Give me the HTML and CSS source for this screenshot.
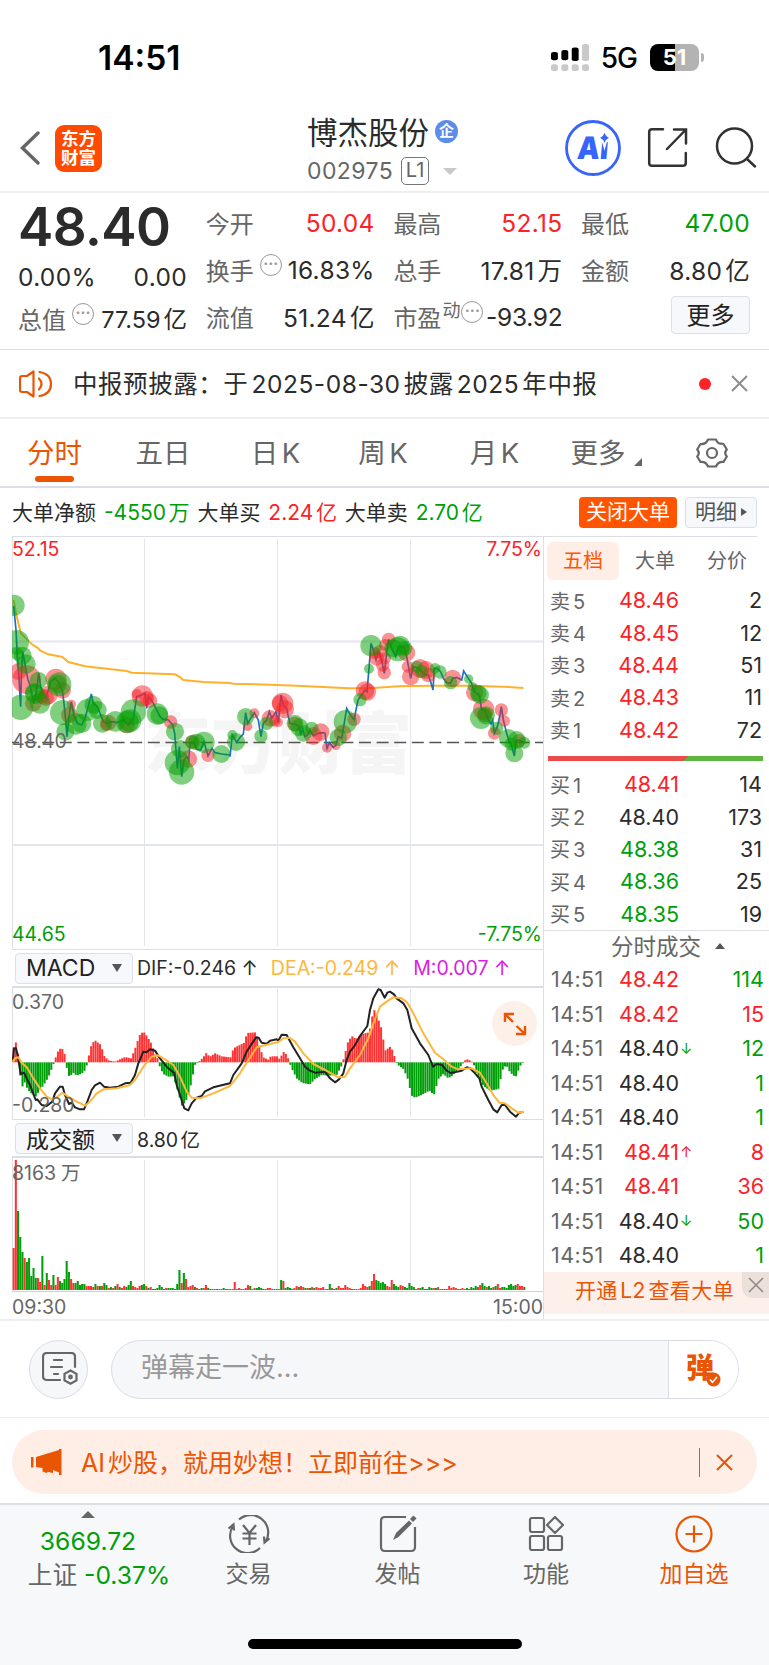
FILE: index.html
```html
<!DOCTYPE html>
<html lang="zh-CN">
<head>
    <meta charset="UTF-8">
    <meta name="viewport" content="width=device-width, initial-scale=1.0">
    <title>博杰股份 002975</title>
    <link rel="stylesheet" href="styles.css">
</head>
<body>
    <div class="status-bar">
        <span class="clock">14:51</span>
        <div class="status-right">
            <svg width="38" height="27" viewBox="0 0 38.500 40" preserveAspectRatio="none">
                <g fill="#000"><rect x="0" y="12" width="7" height="12" rx="2.5"/><rect x="10.5" y="9" width="7" height="15" rx="2.5"/><rect x="21" y="5" width="7" height="20" rx="2.5"/></g>
                <g fill="#c9c9c9"><rect x="31.500" y="0" width="7" height="25" rx="2.5"/><rect x="0" y="30" width="7" height="10" rx="2.5"/><rect x="10.500" y="30" width="7" height="10" rx="2.5"/><rect x="21" y="30" width="7" height="10" rx="2.5"/><rect x="31.500" y="30" width="7" height="10" rx="2.5"/></g>
            </svg>
            <span class="net">5G</span>
            <span class="battery">51</span>
        </div>
    </div>

    <header class="header">
        <div class="header-left">
            <svg class="back" width="20" height="34" viewBox="0 0 20 34" fill="none" stroke="#666" stroke-width="3.400" stroke-linecap="round"><path d="M18 2 2.500 17 18 32"/></svg>
            <div class="logo">东方<br>财富</div>
        </div>
        <div class="stock">
            <div class="stock-name">博杰股份<span class="ent">企</span></div>
            <div class="stock-code">002975<span class="level">L1</span><i class="caret"></i></div>
        </div>
        <div class="header-right">
            <svg width="56" height="56" viewBox="0 0 56 56">
                <circle cx="28" cy="28" r="26.500" fill="none" stroke="#3764fb" stroke-width="2.800"/>
                <text class="ai" x="15" y="39" textLength="31" lengthAdjust="spacingAndGlyphs" transform="skewX(-5)">Ai</text>
                <path d="M39.500 12.500q1 4 4.500 5.300-3.500 1.400-4.500 5.200-1-3.800-4.500-5.200 3.500-1.300 4.500-5.300z" fill="#3764fb" stroke="#fff" stroke-width="4" paint-order="stroke"/>
            </svg>
            <svg width="42" height="42" viewBox="0 0 42 42" fill="none" stroke="#323232" stroke-width="2.500" stroke-linecap="round"><path d="M16 2.200H5Q2.200 2.200 2.200 5v31q0 2.800 2.800 2.800h31q2.800 0 2.800-2.800V26"/><path d="M27 2.500h12v14M38.500 3 20 22"/></svg>
            <svg width="42" height="42" viewBox="0 0 42 42" fill="none" stroke="#323232" stroke-width="2.500" stroke-linecap="round"><circle cx="19.500" cy="19" r="17.500"/><path d="M32 32l8 7.500"/></svg>
        </div>
    </header>

    <section class="quote">
        <div class="col first">
            <div class="price">48.40</div>
            <div class="row pct"><span>0.00%</span><span>0.00</span></div>
            <div class="row"><label>总值</label><i class="tip">···</i><span>77.59亿</span></div>
        </div>
        <div class="col">
            <div class="row"><label>今开</label><span class="red">50.04</span></div>
            <div class="row"><label>换手</label><i class="tip">···</i><span>16.83%</span></div>
            <div class="row"><label>流值</label><span>51.24亿</span></div>
        </div>
        <div class="col">
            <div class="row"><label>最高</label><span class="red">52.15</span></div>
            <div class="row"><label>总手</label><span>17.81万</span></div>
            <div class="row"><label>市盈<sup>动</sup></label><i class="tip tight">···</i><span>-93.92</span></div>
        </div>
        <div class="col">
            <div class="row"><label>最低</label><span class="green">47.00</span></div>
            <div class="row"><label>金额</label><span>8.80亿</span></div>
            <div class="row end"><button class="more-btn">更多</button></div>
        </div>
    </section>

    <div class="notice">
        <svg width="34" height="28" viewBox="0 0 34 28" fill="none" stroke="#ea5504" stroke-width="2.200" stroke-linejoin="round" stroke-linecap="round"><path d="M14.500 1.500v25L8 22H3q-2 0-2-2V8q0-2 2-2h5z"/><path d="M20 8.500q5 5.500 0 11M20.500 2Q32 4 32 14T20.500 26"/></svg>
        <p>中报预披露：于2025-08-30披露2025年中报</p>
        <i class="dot"></i>
        <svg class="x" width="17" height="17" viewBox="0 0 17 17" stroke="#8c8c8c" stroke-width="2"><path d="M1 1 16 16M16 1 1 16"/></svg>
    </div>

    <nav class="tabs">
        <a class="active">分时</a>
        <a>五日</a>
        <a>日K</a>
        <a>周K</a>
        <a>月K</a>
        <a class="more">更多</a>
        <svg width="32" height="32" viewBox="0 0 32 32" fill="none" stroke="#666" stroke-width="2.200" stroke-linejoin="round"><path d="M12 2.500h8q1.500 4.500 5.500 4.200l2 .3 3.300 5.500q-3.200 3.500 0 7L27.500 25q-5.500-.5-7.500 4.500h-8Q10 24.500 4.500 25L1.200 19.500q3.200-3.500 0-7L4.500 7Q10 7.500 12 2.500z"/><circle cx="16" cy="16" r="5"/></svg>
    </nav>

    <div class="big-order">
        <p>大单净额 <b class="green">-4550万</b> 大单买 <b class="red">2.24亿</b> 大单卖 <b class="green">2.70亿</b></p>
        <button class="close-big">关闭大单</button>
        <button class="detail">明细<i></i></button>
    </div>

    <main class="market">
        <div class="charts">
            <svg class="main-chart" width="531" height="412" viewBox="0 0 531 412">
                <g class="grid-line"><path d="M132.500 2V409M265.500 2V409M398.500 2V409"/><path d="M0 104.500H532M0 308H532" stroke-width="2"/></g>
                <text class="watermark" x="132" y="231">东方财富</text>
                <path d="M0 205.500H532" stroke="#555" stroke-width="1.300" stroke-dasharray="12 5.600" stroke-dashoffset="5"/>
                <g transform="translate(-12 -7) scale(.33333)">
                    <polyline id="avgLine" fill="none" stroke="#ffb02e" stroke-width="6"/>
                    <polyline id="priceLine" fill="none" stroke="#1f6fc9" stroke-width="5"/>
                    <g id="bubbles"></g>
                </g>
                <g class="axis">
                    <text x="0" y="19" class="f-red">52.15</text><text x="530" y="19" text-anchor="end" class="f-red">7.75%</text>
                    <text x="0" y="211">48.40</text>
                    <text x="0" y="404" class="f-green">44.65</text><text x="530" y="404" text-anchor="end" class="f-green">-7.75%</text>
                </g>
            </svg>
            <div class="indicator">
                <span class="select wide">MACD</span>
                <span class="val">DIF:-0.246 ↑</span><span class="val dea">DEA:-0.249 ↑</span><span class="val m">M:0.007 ↑</span>
            </div>
            <div class="macd-wrap">
                <svg width="531" height="131" viewBox="0 0 531 131">
                    <path class="grid-line" d="M132.500 1V129M265.500 1V129M398.500 1V129"/>
                    <g transform="translate(-12 -58) scale(.33333)">
                        <g id="macdBars"></g>
                        <polyline id="difLine" fill="none" stroke="#222" stroke-width="6" stroke-linejoin="round"/>
                        <polyline id="deaLine" fill="none" stroke="#fdb73a" stroke-width="6" stroke-linejoin="round"/>
                    </g>
                    <g class="axis"><text x="0" y="21">0.370</text><text x="0" y="124">-0.280</text></g>
                </svg>
                <div class="expand"><svg width="24" height="24" viewBox="0 0 24 24" fill="none" stroke="#ea5504" stroke-width="2.400"><path d="M2 10V2h9M2 2l8 8M22 14v8h-9M22 22l-8.500-8"/></svg></div>
            </div>
            <div class="indicator vol">
                <span class="select">成交额</span>
                <span class="val">8.80亿</span>
            </div>
            <svg class="vol-chart" width="531" height="133" viewBox="0 0 531 133">
                <path class="grid-line" d="M132.500 2V132M265.500 2V132M398.500 2V132"/>
                <g id="volBars"></g>
                <g class="axis"><text x="0" y="22">8163</text><text x="49" y="22">万</text></g>
            </svg>
            <div class="time-axis"><span>09:30</span><span>15:00</span></div>
        </div>

        <aside class="side">
            <div class="side-tabs"><span class="on">五档</span><span>大单</span><span>分价</span></div>
            <div class="book">
                <div><label>卖5</label><span class="red">48.46</span><em>2</em></div>
                <div><label>卖4</label><span class="red">48.45</span><em>12</em></div>
                <div><label>卖3</label><span class="red">48.44</span><em>51</em></div>
                <div><label>卖2</label><span class="red">48.43</span><em>11</em></div>
                <div><label>卖1</label><span class="red">48.42</span><em>72</em></div>
            </div>
            <div class="ratio"></div>
            <div class="book">
                <div><label>买1</label><span class="red">48.41</span><em>14</em></div>
                <div><label>买2</label><span>48.40</span><em>173</em></div>
                <div><label>买3</label><span class="green">48.38</span><em>31</em></div>
                <div><label>买4</label><span class="green">48.36</span><em>25</em></div>
                <div><label>买5</label><span class="green">48.35</span><em>19</em></div>
            </div>
            <div class="deal-title">分时成交<i></i></div>
            <div class="deals">
                <div><label>14:51</label><span class="red">48.42</span><i></i><em class="green">114</em></div>
                <div><label>14:51</label><span class="red">48.42</span><i></i><em class="red">15</em></div>
                <div><label>14:51</label><span>48.40</span><i class="green">↓</i><em class="green">12</em></div>
                <div><label>14:51</label><span>48.40</span><i></i><em class="green">1</em></div>
                <div><label>14:51</label><span>48.40</span><i></i><em class="green">1</em></div>
                <div><label>14:51</label><span class="red">48.41</span><i class="red">↑</i><em class="red">8</em></div>
                <div><label>14:51</label><span class="red">48.41</span><i></i><em class="red">36</em></div>
                <div><label>14:51</label><span>48.40</span><i class="green">↓</i><em class="green">50</em></div>
                <div><label>14:51</label><span>48.40</span><i></i><em class="green">1</em></div>
            </div>
            <div class="promo">开通L2查看大单<span class="promo-x"><svg width="16" height="16" viewBox="0 0 16 16" stroke="#8f8782" stroke-width="1.500"><path d="M1 1 15 15M15 1 1 15"/></svg></span></div>
        </aside>
    </main>

    <div class="danmu">
        <div class="danmu-set">
            <svg width="36" height="34" viewBox="0 0 36 34" fill="none" stroke="#666" stroke-width="2.200" stroke-linecap="round"><path d="M18 28H5q-4 0-4-4V5q0-4 4-4h24q4 0 4 4v10M12 8h8M9 15h11M12 22h4"/><path d="M28.500 18.500l6 3.300v6.600l-6 3.400-6-3.400v-6.600z"/><circle cx="28.500" cy="25" r="1.300"/></svg>
        </div>
        <div class="danmu-input">
            <span>弹幕走一波...</span>
            <div class="danmu-switch">弹<svg width="15" height="15" viewBox="0 0 15 15"><circle cx="7.500" cy="7.500" r="7" fill="#ea5504"/><path d="M4 7.500l2.500 2.700L11 5" fill="none" stroke="#fff" stroke-width="1.600"/></svg></div>
        </div>
    </div>

    <div class="banner-wrap">
        <div class="banner">
            <svg width="31" height="26" viewBox="0 0 31 26" fill="#ea5504"><path d="M0 8h2.500v10.500H0zM5 8 28 1V0h2.500v26H28v-2.500L22 21v3l-5-1-1.500 1-4-1.500V19L5 18z"/></svg>
            <p>AI炒股，就用妙想！立即前往&gt;&gt;&gt;</p>
            <svg class="banner-x" width="17" height="17" viewBox="0 0 17 17" stroke="#ea5504" stroke-width="2"><path d="M1 1 16 16M16 1 1 16"/></svg>
        </div>
    </div>

    <footer class="footer">
        <div class="index-box">
            <i></i>
            <div class="green">3669.72</div>
            <div>上证 <span class="green">-0.37%</span></div>
        </div>
        <div class="item">
            <svg width="44" height="38" viewBox="0 0 44 38" fill="none" stroke="#666" stroke-width="2.200"><path d="M12 4.500A17.500 17.500 0 0 1 39 26M42.500 23.500l-5 4-.5-6M33 33A17.500 17.500 0 0 1 6 11M1.500 13.500l5-4 .5 6"/><path d="M16 10l6.500 8L29 10M15.500 18.500h14M15.500 23.500h14M22.500 18v12"/></svg>
            <span>交易</span>
        </div>
        <div class="item">
            <svg width="38" height="38" viewBox="0 0 38 38" fill="none" stroke="#666" stroke-width="2.200"><path d="M27 2H6Q2 2 2 6v26q0 4 4 4h26q4 0 4-4V12"/><path d="M14 25l3-7L30 5.500l3 3L19.500 22z" fill="#666" stroke="none"/><path d="M32.500 4l2-2 1.500 1.500-2 2z" fill="#666"/></svg>
            <span>发帖</span>
        </div>
        <div class="item">
            <svg width="36" height="36" viewBox="0 0 36 36" fill="none" stroke="#666" stroke-width="2.200" stroke-linejoin="round"><rect x="2" y="2" width="14" height="14" rx="2"/><rect x="2" y="20" width="14" height="14" rx="2"/><rect x="20" y="20" width="14" height="14" rx="2"/><path d="M27 1l8 8-8 8-8-8z"/></svg>
            <span>功能</span>
        </div>
        <div class="item add">
            <svg width="38" height="38" viewBox="0 0 38 38" fill="none" stroke="#ea5504" stroke-width="2.200"><circle cx="19" cy="19" r="17.500"/><path d="M10.500 19h17M19 10.500v17"/></svg>
            <span>加自选</span>
        </div>
        <div class="home-bar"></div>
    </footer>

    <script>
        const RED = '#f33', GREEN = '#009f0a';

        // 价格线，左半段和右半段分开记录
        const priceL = [41,228,48,300,52,380,56,430,62,530,64,440,68,365,72,385,78,420,84,450,90,465,97,500,101,520,110,480,116,430,122,470,130,490,137,505,145,480,152,455,165,445,175,455,187,480,192,520,196,560,201,620,207,560,214,515,222,555,232,580,245,585,255,565,262,540,274,492,280,520,292,530,300,550,310,575,320,580,335,575,350,578,370,570,385,585,400,565,410,500,425,495,435,490,440,535,445,500,455,510,465,530,480,560,490,568,505,570,518,585,524,610,528,660,532,715,538,650,545,740,552,690,560,680,566,690,570,640,582,640,590,658,602,660,612,635,624,678,636,655,645,668,665,672,690,675,690,680,697,615,710,637,720,622,730,612,737,548,743,580,752,565,763,548,775,570,783,620,790,580,800,570,808,545];
        const priceR = [5,355,18,335,25,368,33,285,40,315,50,325,55,350,60,370,75,372,88,380,92,405,98,385,104,410,112,405,120,390,130,408,145,400,160,398,165,400,171,445,178,428,190,442,198,435,205,410,215,415,222,375,230,325,238,340,252,360,264,300,275,285,285,270,291,275,297,205,303,130,310,150,318,180,325,155,335,180,343,220,350,160,356,118,365,145,377,170,385,140,400,140,410,170,422,235,430,200,445,205,455,215,468,225,475,225,482,245,489,270,493,205,500,205,512,215,520,235,530,248,542,250,548,235,560,232,575,240,581,213,595,235,605,250,612,275,628,285,635,330,645,330,655,360,663,372,668,360,673,400,682,380,690,345,694,320,700,360,710,400,716,420,724,435,733,468,738,425,746,420,755,425,765,428];
        const avgL = [41,210,48,250,55,280,63,310,75,322,95,342,115,355,120,361,145,373,187,381,205,396,255,409,380,423,395,428,525,433,540,441,550,450,610,456,690,459,700,461];
        const avgR = [0,254,80,257,160,261,235,265,300,265,385,259,480,257,600,257,700,260,760,264];

        // 大单气泡：x, y, 半径
        const redL = [55,425,25,80,449,43,100,520,25,137,503,25,145,495,28,125,500,22,168,448,32,188,481,25,214,523,14,208,555,25,325,578,24,318,585,18,380,585,25,427,498,32,410,492,15,440,505,22,450,512,22,512,576,20,565,687,26,578,636,22,624,676,20,763,550,15,743,589,14,810,565,25,840,520,25,824,572,18];
        const greenL = [42,226,32,50,337,37,50,370,20,68,377,27,78,402,29,62,532,38,115,451,26,102,487,27,120,520,31,105,492,30,178,463,36,172,462,28,188,548,38,196,605,27,228,582,32,245,580,29,262,540,33,280,524,27,293,540,27,307,580,28,346,574,31,382,576,34,390,572,34,400,546,38,472,552,32,478,556,27,525,605,27,540,657,27,532,698,38,545,726,38,575,636,20,612,637,32,664,672,27,590,636,25,697,615,15,708,636,27,737,560,26,783,618,20,800,580,20];
        const redR = [38,310,32,45,328,27,25,367,14,75,372,22,130,408,27,152,396,26,171,443,15,198,436,14,218,400,26,252,358,20,285,272,28,292,276,26,315,160,18,320,175,22,330,155,20,338,195,20,343,218,20,356,118,20,345,175,18,345,135,18,410,158,26,413,200,18,422,230,26,450,205,28,467,210,27,475,225,22,548,235,26,614,278,26,641,328,32,645,345,22,673,400,19,694,330,20,703,363,17,747,422,20];
        const greenR = [75,370,25,88,382,27,100,400,25,125,385,20,226,365,35,205,412,26,270,299,20,297,206,15,303,137,32,370,145,27,383,148,36,390,137,30,405,145,22,440,200,18,455,215,20,495,205,16,510,216,20,542,248,20,596,237,14,625,280,25,630,285,27,607,260,14,633,354,33,648,346,27,680,385,20,715,415,28,724,432,20,733,460,27,763,428,18,740,420,27];

        const difL = [38,395,42,355,48,355,53,375,62,432,72,428,80,445,90,465,107,510,112,508,125,525,140,528,157,515,165,490,180,470,188,470,195,495,207,522,215,518,225,532,240,538,252,538,262,515,275,480,285,466,300,458,312,470,330,473,355,470,375,460,392,458,405,435,415,400,430,365,440,367,450,358,465,362,480,385,500,410,523,430,530,465,545,510,553,535,565,541,575,520,590,503,605,498,615,484,640,472,690,460,700,435,725,400,740,365,768,322,776,323,785,338,800,341];
        const difR = [0,332,20,328,25,332,35,314,50,315,58,330,70,352,90,385,105,410,120,422,135,428,165,425,180,445,195,457,207,448,220,430,230,390,240,365,252,350,270,318,292,288,300,240,310,205,325,178,332,180,344,203,352,188,360,185,372,193,380,205,400,220,412,240,425,295,450,340,475,375,489,410,500,402,515,404,530,422,542,429,575,422,590,412,600,415,615,430,628,445,635,470,655,510,670,538,682,547,695,525,705,525,720,545,738,560,748,548,760,545];
        const deaL = [38,395,45,385,55,382,65,398,80,412,100,445,120,475,140,500,157,508,170,502,187,488,205,500,230,515,255,527,270,515,290,490,310,478,350,475,390,465,405,450,430,410,455,380,475,376,495,388,520,405,540,440,560,485,575,503,600,505,640,490,690,468,720,430,745,390,770,352,785,348];
        const deaR = [0,342,25,336,40,325,58,323,75,335,100,370,130,402,165,420,205,442,225,440,240,415,270,375,295,325,310,280,330,230,350,215,370,202,395,205,412,218,430,250,460,310,495,368,520,388,545,410,565,418,605,415,630,428,650,460,670,495,688,518,705,520,725,535,745,548,760,545];

        // MACD 柱的拐点：x, 高度（正红负绿）
        const histL = [38,20,44,68,51,52,57,5,60,-30,65,-82,72,-55,80,-75,90,-90,107,-103,118,-85,130,-70,145,-45,158,-12,164,5,172,30,183,44,192,35,198,0,203,-35,210,-45,218,-30,230,-40,248,-32,258,-20,263,5,275,55,285,66,303,52,312,20,325,6,345,2,375,16,393,12,405,40,418,80,430,93,440,80,455,55,465,25,474,10,480,-15,490,-35,505,-43,520,-42,535,-90,545,-130,556,-120,568,-90,578,-40,586,-5,598,3,610,15,618,28,630,17,645,27,665,18,693,15,700,42,735,60,740,88,768,90,778,50,790,15,805,8];
        const histR = [2,18,25,18,30,5,35,22,42,32,52,20,58,0,66,-20,80,-48,97,-62,120,-66,135,-50,155,-38,175,-40,200,-38,215,-10,222,15,235,65,247,78,258,70,275,85,298,90,308,145,314,158,325,130,335,100,345,35,362,48,370,30,377,5,384,-8,400,-20,412,-45,425,-100,435,-106,455,-98,478,-85,492,-98,505,-50,520,-35,535,-48,550,-38,565,-20,578,-5,583,5,592,9,602,5,610,-2,620,-35,640,-70,660,-85,685,-80,700,-15,710,-10,720,-30,737,-45,750,-12,757,-2,763,4];

        // 每分钟成交额（正红负绿）
        const vol = [42,130,-79,-53,-38,32,-28,-32,-14,-22,-12,12,8,-34,5,-17,10,5,-15,5,13,-9,-7,-11,-29,-18,11,7,-7,-9,-5,-6,-6,4,4,4,3,-6,4,-4,4,-7,-5,2,-3,2,-4,6,-3,2,4,-3,-5,-9,4,3,2,4,-5,-6,4,-2,3,-1,-1,-2,-5,-3,-1,2,-2,-2,-2,-1,-6,-20,7,-17,11,3,4,5,-3,2,-1,-2,2,5,-2,-1,-1,1,-1,1,1,-2,-1,1,1,1,8,1,2,-1,1,2,5,-4,1,2,-2,-3,-2,-1,1,2,2,1,1,1,1,-10,9,-2,-3,-2,-1,2,4,-3,4,3,-2,2,-2,3,-2,3,2,2,3,1,-1,-6,2,-1,-2,4,2,2,5,3,2,-1,1,1,1,2,6,4,3,-4,9,16,-10,-9,-7,-8,-6,4,3,10,-6,-4,-3,5,4,-3,-2,-7,-4,-3,1,2,-2,-3,-1,-1,-3,-2,2,-2,3,1,-1,-1,1,4,2,3,2,1,-1,2,1,-2,-1,-3,-2,-4,3,5,-7,-4,3,-4,-2,3,-4,6,2,-3,-3,-2,-5,-6,-4,-5,6,4,4,-3];

        function shift(arr, dx, dy) {
            return arr.map((v, i) => v + (i % 2 ? dy : dx));
        }

        function line(id, left, right, dy) {
            const el = document.getElementById(id);
            el.setAttribute('points', left.concat(shift(right, 810, dy)).join(' '));
        }

        function bubbles(arr, color, dx, dy) {
            let html = '';
            for (let i = 0; i < arr.length; i += 3) {
                html += `<circle cx="${arr[i] + dx}" cy="${arr[i + 1] + dy}" r="${arr[i + 2]}" fill="${color}"/>`;
            }
            return html;
        }

        line('priceLine', priceL, priceR, 210);
        line('avgLine', avgL, avgR, 210);
        line('difLine', difL, difR, 0);
        line('deaLine', deaL, deaR, 0);

        document.getElementById('bubbles').innerHTML =
            bubbles(redL, 'rgba(245,35,40,.5)', 0, 0) + bubbles(greenL, 'rgba(0,160,0,.5)', 0, 0) +
            bubbles(redR, 'rgba(245,35,40,.5)', 810, 210) + bubbles(greenR, 'rgba(0,160,0,.5)', 810, 210);

        const hist = histL.concat(shift(histR, 810, 0));
        let bars = '';
        let k = 0;
        for (let x = 41; x <= 1573; x += 6.64) {
            while (k < hist.length - 4 && hist[k + 2] < x) k += 2;
            const t = (x - hist[k]) / (hist[k + 2] - hist[k]);
            const h = hist[k + 1] + (hist[k + 3] - hist[k + 1]) * t;
            bars += `<rect x="${x - 3}" y="${h > 0 ? 397 - h : 397}" width="6" height="${Math.max(2, Math.abs(h))}" fill="${h > 0 ? RED : GREEN}"/>`;
        }
        document.getElementById('macdBars').innerHTML = bars;

        document.getElementById('volBars').innerHTML = vol.map((v, i) =>
            `<rect x="${(0.6 + i * 2.211).toFixed(2)}" y="${132 - Math.abs(v)}" width="2.050" height="${Math.abs(v)}" fill="${v > 0 ? RED : GREEN}"/>`
        ).join('');
    </script>
</body>
</html>
```

FILE: styles.css
```css
* {
    box-sizing: border-box;
}

body {
    margin: 0;
    width: 769px;
    height: 1665px;
    overflow: hidden;
    display: flex;
    flex-direction: column;
    background: #fff;
    color: #2b2b2b;
    font-family: Inter, "Noto Sans CJK SC", sans-serif;
    text-autospace: normal;
}

p {
    margin: 0;
}

i, em {
    font-style: normal;
}

svg {
    display: block;
    flex: none;
}

button {
    font-family: inherit;
    padding: 0;
}

.red {
    color: #fb2228;
}

.green {
    color: #009f0a;
}

/* 状态栏 */
.status-bar {
    height: 107px;
    padding: 8px 65px 0 98px;
    display: flex;
    justify-content: space-between;
    align-items: center;
    color: #000;
}

.clock {
    font-size: 33.500px;
    font-weight: 600;
}

.status-right {
    display: flex;
    align-items: center;
}

.net {
    font-size: 28px;
    font-weight: 500;
    margin: 1px 13px 0 12px;
    letter-spacing: -1px;
}

.battery {
    position: relative;
    width: 49px;
    height: 27px;
    border-radius: 8px;
    background: linear-gradient(90deg, #000 51%, #b3b3b3 51%);
    color: #fff;
    font-size: 22px;
    font-weight: 700;
    line-height: 27px;
    text-align: center;
    margin-right: 5px;
}

.battery::after {
    content: "";
    position: absolute;
    right: -5px;
    top: 9px;
    width: 3px;
    height: 9px;
    border-radius: 0 3px 3px 0;
    background: #b3b3b3;
}

/* 头部 */
.header {
    height: 86px;
    display: grid;
    grid-template-columns: 250px 1fr 250px;
    align-items: center;
    border-bottom: 2px solid #eee;
}

.header-left, .header-right {
    display: flex;
    align-items: center;
    padding-bottom: 3px;
}

.header-left {
    padding-left: 20px;
    gap: 15px;
}

.header-right {
    justify-content: flex-end;
    gap: 26px;
    padding-right: 12px;
}

.ai {
    font-size: 31px;
    font-weight: 900;
    fill: #3764fb;
}

.logo {
    width: 47px;
    height: 47px;
    border-radius: 9px;
    background: #ff4a00;
    color: #fff;
    font-size: 17.500px;
    font-weight: 700;
    line-height: 19px;
    padding-top: 4px;
    text-align: center;
}

.stock {
    padding: 5px 0 0 57px;
}

.stock-name {
    display: flex;
    align-items: center;
    height: 38px;
    font-size: 30.500px;
}

.ent {
    width: 23px;
    height: 23px;
    margin-left: 6px;
    border-radius: 50%;
    background: #5b8ceb;
    color: #fff;
    font-size: 15px;
    font-weight: 700;
    line-height: 22px;
    text-align: center;
}

.stock-code {
    display: flex;
    align-items: center;
    height: 42px;
    color: #666;
    font-size: 23px;
    letter-spacing: .4px;
}

.level {
    height: 28px;
    width: 28px;
    margin: 0 14px 0 8px;
    border: 1.500px solid #777;
    border-radius: 5px;
    font-size: 20px;
    line-height: 25px;
    text-align: center;
    letter-spacing: 0;
}

.caret {
    border: 7px solid transparent;
    border-top-color: #c8c8c8;
    border-bottom: 0;
}

/* 行情 */
.quote {
    height: 157px;
    padding: 6px 18px 0;
    display: grid;
    grid-template-columns: repeat(4, 169px);
    column-gap: 18.700px;
    border-bottom: 1px solid #ddd;
    font-size: 24.500px;
    letter-spacing: .3px;
}

.row {
    display: flex;
    align-items: center;
    justify-content: space-between;
    height: 47px;
    white-space: nowrap;
}

.row label {
    color: #666;
    font-size: 24px;
    letter-spacing: 0;
}

.price {
    height: 55px;
    font-size: 53px;
    font-weight: 600;
    line-height: 56px;
    letter-spacing: -.6px;
}

.row.pct {
    height: 46px;
}

.first .row:last-child {
    height: 36px;
}

.first .row:last-child span {
    font-size: 23.500px;
    letter-spacing: 0;
}

.tip {
    width: 22px;
    height: 22px;
    margin: -9px auto 0 6px;
    border: 1.500px solid #999;
    border-radius: 50%;
    color: #999;
    font-size: 15px;
    font-weight: 700;
    line-height: 18px;
    text-align: center;
    letter-spacing: 0;
}

.tip.tight {
    margin-left: 1px;
}

.tight + span {
    letter-spacing: -.3px;
}

.row sup {
    font-size: 18px;
    line-height: 0;
    vertical-align: 10px;
    margin-left: 1px;
}

.row.end {
    justify-content: flex-end;
}

.more-btn {
    width: 79px;
    height: 38px;
    border: 1.500px solid #dcdfe8;
    border-radius: 4px;
    background: #f7f8fb;
    color: #222;
    font-size: 24px;
    line-height: 33px;
    margin-top: -3px;
}

/* 公告 */
.notice {
    height: 69px;
    padding: 0 21px 0 19px;
    display: flex;
    align-items: center;
    border-bottom: 2px solid #eee;
    font-size: 24.500px;
    letter-spacing: .55px;
}

.notice p {
    flex: 1;
    margin: -2px 0 0 20px;
}

.dot {
    width: 12px;
    height: 12px;
    margin-right: 20px;
    border-radius: 50%;
    background: #fb2228;
}

/* 周期切换 */
.tabs {
    height: 69px;
    display: grid;
    grid-template-columns: 109px 108px 117px 98px 125px 82px 146px;
    align-items: center;
    justify-items: center;
    border-bottom: 2px solid #dcdde6;
    color: #666;
    font-size: 27.500px;
}

.tabs a {
    height: 67px;
    line-height: 68px;
    position: relative;
}

.tabs .active {
    color: #ea5504;
}

.tabs .active::after {
    content: "";
    position: absolute;
    left: 8px;
    bottom: 4px;
    width: 39px;
    height: 6px;
    border-radius: 3px;
    background: #ea5504;
}

.tabs .more::after {
    content: "";
    position: absolute;
    right: -16px;
    bottom: 20px;
    border-left: 8px solid transparent;
    border-bottom: 8px solid #666;
}

/* 大单 */
.big-order {
    height: 48px;
    padding: 0 12px;
    display: flex;
    align-items: center;
    font-size: 21px;
}

.big-order p {
    flex: 1;
    margin-top: -2px;
    word-spacing: 2px;
}

.big-order b {
    font-weight: 400;
}

.close-big, .detail {
    height: 31px;
    border-radius: 4px;
    font-size: 21px;
    line-height: 28px;
}

.close-big {
    width: 98px;
    border: 0;
    background: #ff5500;
    color: #fff;
}

.detail {
    width: 72px;
    margin-left: 8px;
    border: 1.500px solid #dcdfe8;
    background: #f7f8fb;
    color: #555;
}

.detail i {
    display: inline-block;
    margin-left: 4px;
    vertical-align: 3px;
    border: 4.500px solid transparent;
    border-left: 6px solid #555;
    border-right: 0;
}

/* 图表区 */
.market {
    height: 785px;
    display: grid;
    grid-template-columns: 532px 225px;
    padding-left: 12px;
    border-bottom: 2px solid #eee;
}

.charts {
    border-right: 1px solid #dcdde6;
    border-top: 1px solid #dcdde6;
}

.charts > svg, .macd-wrap > svg {
    box-shadow: inset 1px 0 #dfe1ea;
}

.grid-line {
    fill: none;
    stroke: #e3e6f0;
    stroke-width: 1;
}

.watermark {
    font-size: 67px;
    font-weight: 900;
    fill: #f5f5f6;
}

.axis {
    font-size: 19.500px;
    fill: #666;
}

.f-red {
    fill: #fb2228;
}

.f-green {
    fill: #009f0a;
}

.indicator {
    height: 39px;
    padding-left: 3px;
    display: flex;
    align-items: center;
    border-top: 1px solid #dcdde6;
    border-bottom: 2px solid #dcdde6;
    font-size: 19.500px;
}

.select {
    width: 118px;
    height: 31px;
    margin-right: 4px;
    padding: 0 10px;
    display: flex;
    align-items: center;
    justify-content: space-between;
    border: 1.500px solid #dcdfe8;
    border-radius: 4px;
    background: #f7f8fb;
    color: #222;
    font-size: 23px;
}

.select::after {
    content: "";
    border: 5px solid transparent;
    border-top: 8px solid #555;
    border-bottom: 0;
}

.val {
    margin-right: 13px;
}

.dea {
    color: #fdb73a;
}

.m {
    color: #dc1be0;
}

.macd-wrap {
    position: relative;
    height: 131px;
}

.expand {
    position: absolute;
    right: 6px;
    top: 13px;
    width: 45px;
    height: 45px;
    border-radius: 50%;
    background: rgba(253, 238, 230, .9);
    display: flex;
    align-items: center;
    justify-content: center;
}

.time-axis {
    height: 28px;
    padding-top: 3px;
    display: flex;
    justify-content: space-between;
    align-items: center;
    border-top: 1px solid #cfd1da;
    color: #666;
    font-size: 19.500px;
}

/* 右侧盘口 */
.side {
    width: 225px;
    display: flex;
    flex-direction: column;
}

.side-tabs {
    height: 48px;
    padding: 5px 0 4px 3px;
    display: grid;
    grid-template-columns: repeat(3, 72px);
    border-top: 1px solid #dcdde6;
    width: 213px;
    color: #666;
    font-size: 20px;
    line-height: 38px;
    text-align: center;
}

.side-tabs .on {
    border-radius: 6px;
    background: #ffeee6;
    color: #ff5500;
}

.book div, .deals div {
    display: grid;
    align-items: center;
    font-size: 21.500px;
}

.book div {
    grid-template-columns: 50px 79px 83px;
    height: 32.400px;
    padding-left: 6px;
}

.book label, .deals label {
    color: #666;
}

.book label {
    font-size: 20px;
    letter-spacing: .5px;
}

.book span, .book em, .deals span, .deals em {
    text-align: right;
}

.ratio {
    height: 5px;
    width: 215px;
    margin: 10px 0 7px 4px;
    background: linear-gradient(135deg, #ea4b4b 64%, #5cb640 64%);
}

.deal-title {
    height: 32px;
    display: flex;
    align-items: center;
    justify-content: center;
    border-top: 1px solid #dcdde6;
    color: #666;
    font-size: 22.500px;
    padding: 0 0 2px 23px;
}

.deal-title i {
    margin: 2px 0 0 14px;
    border: 5px solid transparent;
    border-bottom: 6px solid #555;
    border-top: 0;
}

.deals div {
    grid-template-columns: 55px 73px 14px 1fr;
    height: 34.500px;
    padding: 0 5px 0 7px;
}

.deals label {
    letter-spacing: .4px;
}

.deals i {
    font-size: 15px;
    padding-left: 1px;
}

.promo {
    position: relative;
    height: 42px;
    padding-right: 4px;
    background: #fdf0ea;
    color: #ea5504;
    font-size: 21px;
    letter-spacing: .4px;
    line-height: 38px;
    text-align: center;
}

.promo-x {
    position: absolute;
    right: 0;
    top: 0;
    width: 27px;
    height: 26px;
    border-radius: 0 0 0 10px;
    background: #ece0da;
    display: flex;
    align-items: center;
    justify-content: center;
}

/* 弹幕 */
.danmu {
    height: 97px;
    padding: 0 30px 0 29px;
    display: flex;
    align-items: center;
    gap: 23px;
    border-bottom: 1px solid #eee;
}

.danmu-set {
    width: 59px;
    height: 59px;
    padding-left: 3px;
    border: 1px solid #d9dce4;
    border-radius: 50%;
    background: #f6f7f9;
    display: flex;
    align-items: center;
    justify-content: center;
}

.danmu-input {
    flex: 1;
    height: 59px;
    display: flex;
    border: 1px solid #d9dce4;
    border-radius: 30px;
    background: #f6f7f9;
    overflow: hidden;
    color: #999;
    font-size: 27px;
    line-height: 53px;
    text-autospace: no-autospace;
}

.danmu-input span {
    flex: 1;
    padding-left: 29px;
}

.danmu-switch {
    position: relative;
    width: 70px;
    padding-left: 17px;
    border-left: 1px solid #d9dce4;
    background: #fff;
    color: #ea5504;
    font-size: 28px;
    font-weight: 900;
    line-height: 55px;
}

.danmu-switch svg {
    position: absolute;
    left: 37px;
    top: 31px;
}

/* 横幅 */
.banner-wrap {
    height: 85px;
    padding: 12px 12px 0;
}

.banner {
    height: 64px;
    padding: 0 24px 0 19px;
    display: flex;
    align-items: center;
    border-radius: 32px;
    background: #feeee6;
    color: #ea5504;
    font-size: 25px;
}

.banner p {
    flex: 1;
    margin: -2px 0 0 19px;
}

.banner::after {
    content: "";
    order: 1;
    width: 1.500px;
    height: 29px;
    margin-right: 16px;
    background: #ea5504;
}

.banner-x {
    order: 2;
}

/* 底部 */
.footer {
    flex: 1;
    position: relative;
    padding: 6px 0 0;
    display: grid;
    grid-template-columns: 174px 149px 149px 148px 148px;
    align-items: start;
    border-top: 2px solid #dcdfe3;
    background: #f7f8fa;
    color: #666;
    font-size: 23px;
}

.index-box {
    padding-left: 24px;
    width: 174px;
    display: flex;
    flex-direction: column;
    align-items: center;
    font-size: 24.700px;
    line-height: 34px;
    white-space: nowrap;
}

.index-box i {
    margin-right: 22px;
    border: 7px solid transparent;
    border-bottom: 7px solid #666;
    border-top: 0;
    margin-bottom: 6px;
}

.index-box div:first-of-type {
    margin-right: 22px;
}

.item {
    padding-top: 4px;
    display: flex;
    flex-direction: column;
    align-items: center;
}

.item svg {
    height: 38px;
}

.item span {
    line-height: 32px;
    margin-top: 5px;
}

.item.add {
    color: #ea5504;
}

.home-bar {
    position: absolute;
    left: 248px;
    bottom: 16px;
    width: 274px;
    height: 10px;
    border-radius: 5px;
    background: #000;
}
```
